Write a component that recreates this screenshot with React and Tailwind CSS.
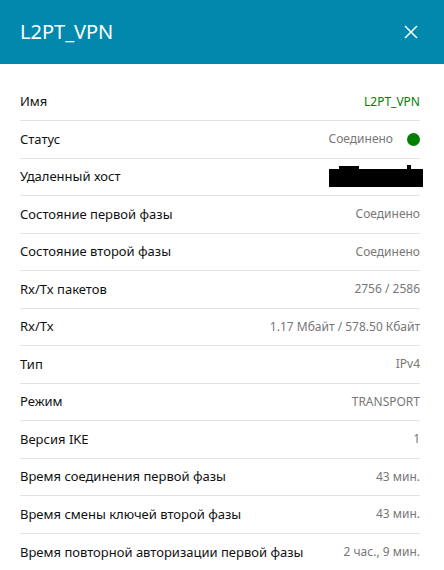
import React from "react";

const rows = [
  { label: "Имя", value: "L2PT_VPN", kind: "name" },
  { label: "Статус", value: "Соединено", kind: "status" },
  { label: "Удаленный хост", kind: "hidden" },
  { label: "Состояние первой фазы", value: "Соединено" },
  { label: "Состояние второй фазы", value: "Соединено" },
  { label: "Rx/Tx пакетов", value: "2756 / 2586" },
  { label: "Rx/Tx", value: "1.17 Мбайт / 578.50 Кбайт" },
  { label: "Тип", value: "IPv4" },
  { label: "Режим", value: "TRANSPORT" },
  { label: "Версия IKE", value: "1" },
  { label: "Время соединения первой фазы", value: "43 мин." },
  { label: "Время смены ключей второй фазы", value: "43 мин." },
  { label: "Время повторной авторизации первой фазы", value: "2 час., 9 мин." },
];

const App = () => {
  return (
    <div className="w-[444px] h-[570px] overflow-hidden bg-white font-['Noto_Sans',sans-serif]">
      {/* Header */}
      <div className="h-16 bg-[#0288ad] flex items-center justify-between pl-5 pr-[26px]">
        <h1 className="text-white text-[20px] leading-none">L2PT_VPN</h1>
        <svg width="14" height="14" viewBox="0 0 14 14" className="text-white">
          <path d="M1 1 L13 13 M13 1 L1 13" stroke="currentColor" strokeWidth="1.5" />
        </svg>
      </div>

      {/* Info list */}
      <div className="pl-5 pr-6 pt-[19.5px]">
        {rows.map((row, i) => (
          <div
            key={row.label}
            className={`h-[37.5px] flex items-center justify-between ${
              i < rows.length - 1 ? "border-b border-[#e3e3e3]" : ""
            }`}
          >
            <span className="text-[13px] text-[#111]">{row.label}</span>
            {row.kind === "name" && (
              <span className="text-[12px] text-[#008000]">{row.value}</span>
            )}
            {row.kind === "status" && (
              <span className="flex items-center gap-[14px]">
                <span className="text-[12px] text-[#777]">{row.value}</span>
                <span className="w-[13px] h-[13px] rounded-full bg-[#008000]" />
              </span>
            )}
            {row.kind === "hidden" && (
              <span className="relative w-[94px] h-[18px] bg-black mr-[-3px] mt-[2px]">
                <span className="absolute left-[10px] top-[-3px] w-[20px] h-[4px] bg-black" />
                <span className="absolute right-[12px] top-[-4px] w-[4px] h-[4px] bg-black" />
              </span>
            )}
            {!row.kind && (
              <span className="text-[12px] text-[#777]">{row.value}</span>
            )}
          </div>
        ))}
      </div>
    </div>
  );
};

export default App;
